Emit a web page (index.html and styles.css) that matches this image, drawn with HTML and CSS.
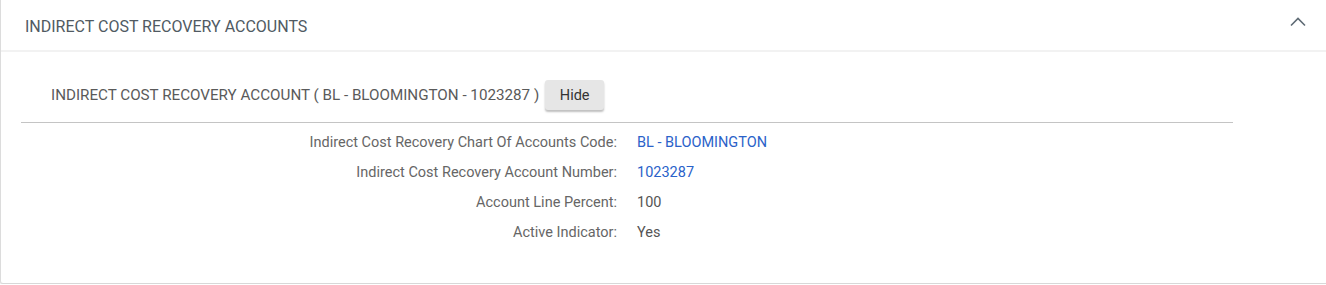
FILE: index.html
```html
<!DOCTYPE html>
<html>
<head>
<meta charset="utf-8">
<link rel="stylesheet" href="styles.css">
</head>
<body>
<div class="card">
  <div class="card-header">
    <span class="card-title">INDIRECT COST RECOVERY ACCOUNTS</span>
    <svg class="chevron" width="16" height="10" viewBox="0 0 16 10"><path d="M1 8.5 L8 1.5 L15 8.5" fill="none" stroke="#5f6b75" stroke-width="1.6"/></svg>
  </div>
  <div class="card-body">
    <div class="sub-header">
      <span class="sub-title">INDIRECT COST RECOVERY ACCOUNT ( BL - BLOOMINGTON - 1023287 )</span>
      <button class="btn">Hide</button>
    </div>
    <div class="fields">
      <div class="label">Indirect Cost Recovery Chart Of Accounts Code:</div>
      <div class="value link">BL - BLOOMINGTON</div>
      <div class="label">Indirect Cost Recovery Account Number:</div>
      <div class="value link">1023287</div>
      <div class="label">Account Line Percent:</div>
      <div class="value">100</div>
      <div class="label">Active Indicator:</div>
      <div class="value">Yes</div>
    </div>
  </div>
</div>
</body>
</html>
```

FILE: styles.css
```css
* { box-sizing: border-box; }
html, body { margin: 0; padding: 0; background: #fff; }
body { font-family: Roboto, "Liberation Sans", sans-serif; color: #555; }

.card {
  width: 1328px;
  height: 284px;
  background: #fff;
  border-left: 1px solid #dcdcdc;
  border-right: 1px solid #dcdcdc;
  border-bottom: 1px solid #d8d8d8;
  box-shadow: 0 1px 2px rgba(0,0,0,0.12);
  border-radius: 0 0 3px 3px;
}

.card-header {
  height: 52px;
  display: flex;
  align-items: center;
  justify-content: space-between;
  padding: 2px 21px 0 24px;
  border-bottom: 2px solid #f2f2f2;
}
.card-title { font-size: 16px; color: #505a62; }
.chevron { margin-bottom: 8px; }

.card-body { padding: 27px 94px 0 20px; }

.sub-header {
  display: flex;
  align-items: center;
  padding-left: 30px;
  height: 32px;
  gap: 6px;
}
.sub-title { font-size: 15.2px; color: #5a5a5a; }
.btn {
  font-family: Roboto, "Liberation Sans", sans-serif;
  font-size: 14.5px;
  color: #333;
  background: #e6e6e6;
  border: none;
  border-radius: 3px;
  height: 30px;
  width: 59px;
  box-shadow: 0 2px 2px rgba(0,0,0,0.25);
  padding: 0;
}

.fields {
  margin-top: 11px;
  border-top: 1px solid #c4c4c4;
  padding-top: 4px;
  display: grid;
  grid-template-columns: 596px auto;
  column-gap: 20px;
  grid-auto-rows: 30px;
  align-items: center;
  font-size: 14.5px;
}
.label { text-align: right; color: #666; }
.value { color: #555; }
.value.link { color: #2a62c9; }
```
